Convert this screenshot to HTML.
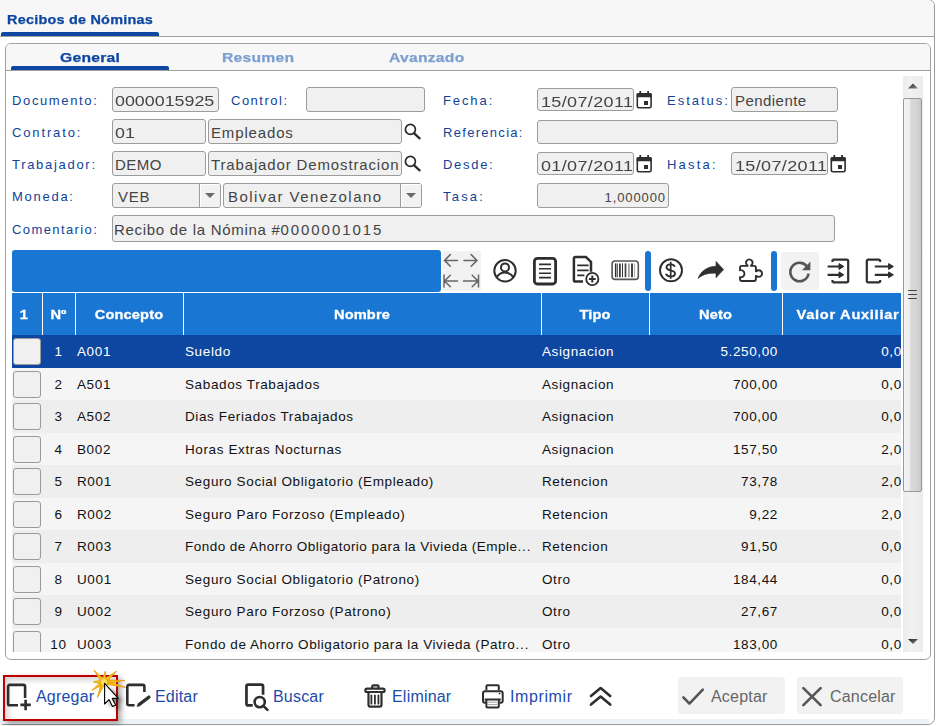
<!DOCTYPE html>
<html><head><meta charset="utf-8">
<style>
*{box-sizing:border-box;margin:0;padding:0}
html,body{width:939px;height:726px;overflow:hidden;background:#fff;font-family:"Liberation Sans",sans-serif;-webkit-font-smoothing:antialiased}
.a{position:absolute}
#outer{left:-3px;top:-1px;width:938px;height:726px;border:1px solid #9a9a9a;border-radius:7px;background:#fff;overflow:hidden}
#topbar{left:0;top:0;width:934px;height:37px;background:#f7f7f7;border-bottom:1px solid #a0a0a0;border-top-right-radius:6px}
#toptab{left:7px;top:13px;font-size:12px;font-weight:bold;color:#0d47a1;-webkit-text-stroke:0.25px #0d47a1;letter-spacing:0.2px;white-space:nowrap;transform:scaleX(1.2);transform-origin:0 0}
#topbarline{left:1px;top:32px;width:158px;height:4px;background:#0d47a1;border-radius:2px 2px 0 0}
#panel{left:5px;top:43px;width:926px;height:617px;border:1px solid #a0a0a0;border-radius:6px;background:#fff;overflow:hidden}
#tabs{left:0;top:0;width:924px;height:27px;background:#f7f7f7;border-bottom:1px solid #a0a0a0}
.tab{top:6px;font-size:12.75px;font-weight:bold;-webkit-text-stroke:0.25px currentColor;letter-spacing:0.2px;white-space:nowrap;transform:scaleX(1.23);transform-origin:0 0}
.lbl{font-size:13px;color:#0f4499;white-space:nowrap;transform-origin:0 0}
.inp{background:#f0f0f0;border:1px solid #9c9c9c;border-radius:3px;font-size:15px;color:#444;white-space:nowrap;overflow:hidden;padding-left:2px;line-height:16px;padding-top:4px}
.sx{display:inline-block;transform-origin:0 0}
.cal{width:17px;height:19px}
.ft{font-size:16px;color:#1a4caa;white-space:nowrap;letter-spacing:0.2px}
.th{font-size:12.5px;font-weight:bold;color:#fff;-webkit-text-stroke:0.3px #fff;text-align:center;letter-spacing:0.1px;white-space:nowrap;transform:scaleX(1.17);transform-origin:50% 0}
.tr{left:0;width:889px;font-size:13.5px;color:#111;letter-spacing:0.62px;white-space:nowrap}
.tr.even{background:#f5f5f5}.tr.odd{background:#eeeeee}.tr.sel1{background:#0d47a1;color:#fff}
.td{position:absolute;top:9px;line-height:15px;white-space:nowrap}
.nm{}
.cb{position:absolute;left:1px;top:3px;width:28px;height:27px;border:1px solid #9a9a9a;border-radius:3px;background:#f0f0f0}
.dd{position:absolute;right:0;top:0;width:21px;height:23px;border-left:1px solid #9c9c9c;box-shadow:inset 1px 1px 0 #fff;background:#f2f2f2}
.dd b{position:absolute;left:5px;top:9px;width:0;height:0;border-left:5px solid transparent;border-right:5px solid transparent;border-top:5px solid #6a6a6a}
</style></head><body>
<div id="outer" class="a"></div>
<div id="topbar" class="a"></div>
<div id="toptab" class="a">Recibos de Nóminas</div>
<div id="topbarline" class="a"></div>

<div id="panel" class="a">
  <div id="tabs" class="a"></div>
</div>
<div class="a" style="left:11px;top:66px;width:158px;height:4px;background:#0d47a1;border-radius:2px 2px 0 0"></div>
<div class="a tab" style="left:60px;top:50px;color:#0d47a1">General</div>
<div class="a tab" style="left:222px;top:50px;color:#7b9fcf">Resumen</div>
<div class="a tab" style="left:389px;top:50px;color:#7b9fcf">Avanzado</div>

<!-- form labels -->
<div class="a lbl" style="left:12px;top:93px;letter-spacing:1.63px">Documento:</div>
<div class="a lbl" style="left:12px;top:125px;letter-spacing:1.86px">Contrato:</div>
<div class="a lbl" style="left:12px;top:157px;letter-spacing:1.7px">Trabajador:</div>
<div class="a lbl" style="left:12px;top:189px;letter-spacing:1.73px">Moneda:</div>
<div class="a lbl" style="left:12px;top:222px;letter-spacing:1.4px">Comentario:</div>
<div class="a lbl" style="left:231px;top:93px;letter-spacing:1.5px">Control:</div>
<div class="a lbl" style="left:443px;top:93px;letter-spacing:1.9px">Fecha:</div>
<div class="a lbl" style="left:443px;top:125px;letter-spacing:1.3px">Referencia:</div>
<div class="a lbl" style="left:443px;top:157px;letter-spacing:1.7px">Desde:</div>
<div class="a lbl" style="left:443px;top:189px;letter-spacing:2.2px">Tasa:</div>
<div class="a lbl" style="left:667px;top:93px;letter-spacing:2.0px">Estatus:</div>
<div class="a lbl" style="left:667px;top:157px;letter-spacing:2.2px">Hasta:</div>

<!-- inputs -->
<div class="a inp" style="left:112px;top:87px;width:107px;height:25px;padding-top:5px"><span class="sx" style="transform:scaleX(1.19)">0000015925</span></div>
<div class="a inp" style="left:306px;top:87px;width:119px;height:25px"></div>
<div class="a inp" style="left:112px;top:119px;width:94px;height:25px;padding-top:5px"><span class="sx" style="transform:scaleX(1.19)">01</span></div>
<div class="a inp" style="left:208px;top:119px;width:194px;height:25px;padding-top:5px;letter-spacing:0.85px">Empleados</div>
<div class="a inp" style="left:112px;top:151px;width:94px;height:25px;padding-top:5px;letter-spacing:0.5px">DEMO</div>
<div class="a inp" style="left:208px;top:151px;width:194px;height:25px;letter-spacing:0.86px;padding-top:5px">Trabajador Demostracion</div>
<div class="a inp sel" style="left:112px;top:183px;width:109px;height:25px;letter-spacing:0.8px;padding-top:5px;padding-left:5px">VEB<i class="dd"><b></b></i></div>
<div class="a inp sel" style="left:223px;top:183px;width:199px;height:25px;letter-spacing:1.45px;padding-top:5px;padding-left:4px">Bolivar Venezolano<i class="dd"><b></b></i></div>
<div class="a inp" style="left:112px;top:215px;width:723px;height:27px;padding-top:6px;padding-left:1px;letter-spacing:0.7px">Recibo de la Nómina #<span style="letter-spacing:1.95px">0000001015</span></div>
<div class="a inp" style="left:537px;top:88px;width:97px;height:23px;padding-top:5px;padding-left:3px"><span class="sx" style="transform:scaleX(1.2);letter-spacing:0.3px">15/07/2011</span></div>
<div class="a inp" style="left:537px;top:120px;width:301px;height:24px"></div>
<div class="a inp" style="left:537px;top:152px;width:97px;height:23px;padding-top:5px;padding-left:3px"><span class="sx" style="transform:scaleX(1.2);letter-spacing:0.3px">01/07/2011</span></div>
<div class="a inp" style="left:537px;top:183px;width:132px;height:25px;font-size:13px;text-align:right;padding-right:2px;padding-top:6px;letter-spacing:0.9px">1,000000</div>
<div class="a inp" style="left:731px;top:87px;width:107px;height:25px;padding-top:5px;padding-left:3px;letter-spacing:0.45px">Pendiente</div>
<div class="a inp" style="left:731px;top:152px;width:97px;height:23px;padding-top:5px;padding-left:3px"><span class="sx" style="transform:scaleX(1.2);letter-spacing:0.3px">15/07/2011</span></div>

<!-- icons in form -->
<svg class="a" style="left:403px;top:123px" width="20" height="19" viewBox="0 0 20 19"><circle cx="7.4" cy="6.4" r="5" fill="none" stroke="#2a2a2a" stroke-width="1.7"/><line x1="11.2" y1="10.4" x2="16.6" y2="15.4" stroke="#2a2a2a" stroke-width="2.2" stroke-linecap="round"/></svg>
<svg class="a" style="left:403px;top:155px" width="20" height="19" viewBox="0 0 20 19"><circle cx="7.4" cy="6.4" r="5" fill="none" stroke="#2a2a2a" stroke-width="1.7"/><line x1="11.2" y1="10.4" x2="16.6" y2="15.4" stroke="#2a2a2a" stroke-width="2.2" stroke-linecap="round"/></svg>
<svg class="a cal" style="left:636px;top:90px" width="17" height="19" viewBox="0 0 17 19"><rect x="1.3" y="3.8" width="13.8" height="14" rx="1.6" fill="none" stroke="#2e2e2e" stroke-width="1.6"/><rect x="0.6" y="3.2" width="15.2" height="4" rx="1.2" fill="#2e2e2e"/><rect x="3.4" y="1" width="1.8" height="3" fill="#2e2e2e"/><rect x="11.2" y="1" width="1.8" height="3" fill="#2e2e2e"/><rect x="8" y="11" width="4" height="4" fill="#2e2e2e"/></svg>
<svg class="a cal" style="left:636px;top:154px" width="17" height="19" viewBox="0 0 17 19"><rect x="1.3" y="3.8" width="13.8" height="14" rx="1.6" fill="none" stroke="#2e2e2e" stroke-width="1.6"/><rect x="0.6" y="3.2" width="15.2" height="4" rx="1.2" fill="#2e2e2e"/><rect x="3.4" y="1" width="1.8" height="3" fill="#2e2e2e"/><rect x="11.2" y="1" width="1.8" height="3" fill="#2e2e2e"/><rect x="8" y="11" width="4" height="4" fill="#2e2e2e"/></svg>
<svg class="a cal" style="left:830px;top:154px" width="17" height="19" viewBox="0 0 17 19"><rect x="1.3" y="3.8" width="13.8" height="14" rx="1.6" fill="none" stroke="#2e2e2e" stroke-width="1.6"/><rect x="0.6" y="3.2" width="15.2" height="4" rx="1.2" fill="#2e2e2e"/><rect x="3.4" y="1" width="1.8" height="3" fill="#2e2e2e"/><rect x="11.2" y="1" width="1.8" height="3" fill="#2e2e2e"/><rect x="8" y="11" width="4" height="4" fill="#2e2e2e"/></svg>

<!-- toolbar -->
<div class="a" style="left:12px;top:250px;width:429px;height:42px;background:#1976d2;border-radius:3px"></div>
<div class="a" style="left:442px;top:251px;width:20px;height:20px;background:#f2f2f2;border-radius:2px"></div>
<div class="a" style="left:461px;top:251px;width:20px;height:20px;background:#f2f2f2;border-radius:2px"></div>
<div class="a" style="left:442px;top:271px;width:20px;height:20px;background:#f2f2f2;border-radius:2px"></div>
<div class="a" style="left:461px;top:271px;width:20px;height:20px;background:#f2f2f2;border-radius:2px"></div>
<svg class="a" style="left:442px;top:251px" width="40" height="40" viewBox="0 0 40 40" fill="none" stroke="#666" stroke-width="1.5" stroke-linecap="round">
<path d="M2.5 9.4H15.5M8.3 3.6L2.5 9.4L8.3 15.2"/><path d="M22 9.4H35M29.2 3.6L35 9.4L29.2 15.2"/>
<path d="M2 24V36M2.5 30H15.5M8.3 24.2L2.5 30L8.3 35.8"/><path d="M36.5 24V36M21.5 30H36M30.2 24.2L36 30L30.2 35.8"/></svg>
<svg class="a" style="left:492px;top:258px" width="26" height="26" viewBox="0 0 26 26" fill="none" stroke="#2e2e2e" stroke-width="2"><circle cx="13" cy="12.8" r="10.7"/><circle cx="13" cy="9.4" r="4"/><path d="M4.6 19.4C6.8 15.9 9.8 14.6 13 14.6S19.2 15.9 21.4 19.4"/></svg>
<svg class="a" style="left:532px;top:256px" width="26" height="30" viewBox="0 0 26 30" fill="none" stroke="#2e2e2e"><rect x="2.4" y="2.4" width="21.2" height="25.6" rx="3" stroke-width="2.8"/><path d="M7 8.4H19M7 12.8H19M7 17.2H19M7 21.6H19" stroke-width="1.6"/></svg>
<svg class="a" style="left:572px;top:255px" width="30" height="32" viewBox="0 0 30 32" fill="none" stroke="#2e2e2e"><path d="M11 26.6H3.6C2.5 26.6 1.9 26 1.9 24.9V3.4C1.9 2.3 2.5 1.9 3.6 1.9H13.8L19 6.8V16.8" stroke-width="2.5" stroke-linejoin="round"/><path d="M5.2 10.4H16.6M5.2 15.4H16.6M5.2 20.4H12.4" stroke-width="1.8"/><circle cx="20.3" cy="24" r="6.1" stroke-width="1.8"/><path d="M20.3 20.6V27.4M16.9 24H23.7" stroke-width="2"/></svg>
<svg class="a" style="left:610px;top:259px" width="30" height="22" viewBox="0 0 30 22" fill="none"><rect x="2.1" y="2" width="26.2" height="18.4" rx="3" stroke="#555" stroke-width="1.6"/><g stroke-width="1.7"><path d="M5.6 4.4V18.2" stroke="#333" stroke-width="1.4"/><path d="M7.3 4.4V18.2" stroke="#555" stroke-width="1.2"/><path d="M9.9 4.4V18.2" stroke="#333"/><path d="M12.5 4.4V18.2" stroke="#333" stroke-width="1"/><path d="M15.5 4.4V18.2" stroke="#444"/><path d="M18.9 4.4V18.2" stroke="#999"/><path d="M22 4.4V18.2" stroke="#222"/><path d="M24.6 4.4V18.2" stroke="#aaa" stroke-width="1"/></g></svg>
<div class="a" style="left:645px;top:251px;width:6px;height:40px;background:#1976d2;border-radius:3px"></div>
<svg class="a" style="left:658px;top:257px" width="26" height="27" viewBox="0 0 26 27" fill="none" stroke="#2e2e2e"><circle cx="13" cy="13.3" r="11" stroke-width="1.9"/><path d="M16.8 9.8C16.2 8.1 14.7 7.4 12.6 7.4C10.2 7.4 8.5 8.6 8.5 10.4C8.5 14.3 17 12.3 17 16.4C17 18.3 15.1 19.4 12.6 19.4C10.2 19.4 8.5 18.4 8 16.7" stroke-width="1.9"/><path d="M12.7 4.8V21.8" stroke-width="1.7"/></svg>
<svg class="a" style="left:697px;top:260px" width="28" height="20" viewBox="0 0 28 20"><path d="M1 18.5C3.6 11.4 9.6 6.6 19 6.2V1.4L26.6 9.6L19 17.8V13.2C11 12.8 5.4 14.6 1 18.5Z" fill="#2e2e2e" stroke="#2e2e2e" stroke-width="0.6" stroke-linejoin="round"/></svg>
<svg class="a" style="left:737px;top:258px" width="28" height="25" viewBox="0 0 28 25" fill="none" stroke="#2e2e2e" stroke-width="1.9" stroke-linejoin="round"><path d="M5 7.9H10.6V7.5A3.3 3.3 0 1 1 14 7.5V7.9H17C18.3 7.9 18.9 8.5 18.9 9.8V13.3H19.4A3.3 3.3 0 1 1 19.4 17.9H18.9V21C18.9 22.3 18.3 23 17 23H5C3.7 23 3 22.3 3 21V19.2A3.6 3.6 0 1 0 3 12.2V9.8C3 8.5 3.7 7.9 5 7.9Z"/></svg>
<div class="a" style="left:771px;top:251px;width:6px;height:40px;background:#1976d2;border-radius:3px"></div>
<div class="a" style="left:781px;top:252px;width:38px;height:38px;background:#f2f2f2;border-radius:3px"></div>
<svg class="a" style="left:787px;top:258px" width="26" height="26" viewBox="0 0 26 26" fill="none"><path d="M20.6 9.6A9.2 9.2 0 1 0 21.6 15.6" stroke="#555" stroke-width="2.6"/><path d="M23.4 3.6V12.2H15Z" fill="#555"/></svg>
<svg class="a" style="left:826px;top:257px" width="26" height="27" viewBox="0 0 26 27" fill="none" stroke="#2e2e2e" stroke-width="2.2"><path d="M6.5 2.6H20.6C21.6 2.6 22.2 3.2 22.2 4.2V23.8C22.2 24.8 21.6 25.4 20.6 25.4H6.5M6.5 2.6V5M6.5 23V25.4"/><path d="M1.6 9.5H14.5M1.6 17.8H14.5"/><path d="M13 6.6L17.8 9.5L13 12.4ZM13 14.9L17.8 17.8L13 20.7Z" fill="#2e2e2e" stroke-width="1" stroke-linejoin="round"/></svg>
<svg class="a" style="left:864px;top:257px" width="32" height="27" viewBox="0 0 32 27" fill="none" stroke="#2e2e2e" stroke-width="2.2"><path d="M16.2 5V4.2C16.2 3.2 15.6 2.6 14.6 2.6H4.4C3.4 2.6 2.8 3.2 2.8 4.2V23.8C2.8 24.8 3.4 25.4 4.4 25.4H14.6C15.6 25.4 16.2 24.8 16.2 23.8V23"/><path d="M10.8 9.5H26.5M10.8 17.8H26.5"/><path d="M24.6 6.6L29.4 9.5L24.6 12.4ZM24.6 14.9L29.4 17.8L24.6 20.7Z" fill="#2e2e2e" stroke-width="1" stroke-linejoin="round"/></svg>

<!-- table header -->
<div class="a" style="left:12px;top:292px;width:889px;height:43px;background:#1976d2;border-top:1px solid #fff"></div>
<div class="a" style="left:42px;top:293px;width:1px;height:42px;background:#fff"></div>
<div class="a" style="left:75px;top:293px;width:1px;height:42px;background:#fff"></div>
<div class="a" style="left:183px;top:293px;width:1px;height:42px;background:#fff"></div>
<div class="a" style="left:541px;top:293px;width:1px;height:42px;background:#fff"></div>
<div class="a" style="left:649px;top:293px;width:1px;height:42px;background:#fff"></div>
<div class="a" style="left:782px;top:293px;width:1px;height:42px;background:#fff"></div>
<div class="a th" style="left:9px;top:308px;width:30px">1</div>
<div class="a th" style="left:42px;top:308px;width:33px">Nº</div>
<div class="a th" style="left:75px;top:308px;width:108px">Concepto</div>
<div class="a th" style="left:183px;top:308px;width:358px">Nombre</div>
<div class="a th" style="left:541px;top:308px;width:108px">Tipo</div>
<div class="a th" style="left:649px;top:308px;width:133px">Neto</div>
<div class="a th" style="left:779px;top:308px;width:138px;letter-spacing:0.6px">Valor Auxiliar</div>
<div class="a" id="grid" style="left:12px;top:335px;width:889px;height:317px;overflow:hidden">
<div class="a tr sel1" style="top:0px;height:33px"><i class="cb"></i><span class="td" style="left:30px;width:33px;text-align:center">1</span><span class="td" style="left:65px">A001</span><span class="td nm" style="left:173px">Sueldo</span><span class="td" style="left:530px">Asignacion</span><span class="td" style="left:637px;width:129px;text-align:right">5.250,00</span><span class="td" style="left:771px;width:127px;text-align:right">0,00</span></div>
<div class="a tr even" style="top:33px;height:32px"><i class="cb"></i><span class="td" style="left:30px;width:33px;text-align:center">2</span><span class="td" style="left:65px">A501</span><span class="td nm" style="left:173px">Sabados Trabajados</span><span class="td" style="left:530px">Asignacion</span><span class="td" style="left:637px;width:129px;text-align:right">700,00</span><span class="td" style="left:771px;width:127px;text-align:right">0,00</span></div>
<div class="a tr odd" style="top:65px;height:33px"><i class="cb"></i><span class="td" style="left:30px;width:33px;text-align:center">3</span><span class="td" style="left:65px">A502</span><span class="td nm" style="left:173px">Dias Feriados Trabajados</span><span class="td" style="left:530px">Asignacion</span><span class="td" style="left:637px;width:129px;text-align:right">700,00</span><span class="td" style="left:771px;width:127px;text-align:right">0,00</span></div>
<div class="a tr even" style="top:98px;height:32px"><i class="cb"></i><span class="td" style="left:30px;width:33px;text-align:center">4</span><span class="td" style="left:65px">B002</span><span class="td nm" style="left:173px">Horas Extras Nocturnas</span><span class="td" style="left:530px">Asignacion</span><span class="td" style="left:637px;width:129px;text-align:right">157,50</span><span class="td" style="left:771px;width:127px;text-align:right">2,00</span></div>
<div class="a tr odd" style="top:130px;height:33px"><i class="cb"></i><span class="td" style="left:30px;width:33px;text-align:center">5</span><span class="td" style="left:65px">R001</span><span class="td nm" style="left:173px">Seguro Social Obligatorio (Empleado)</span><span class="td" style="left:530px">Retencion</span><span class="td" style="left:637px;width:129px;text-align:right">73,78</span><span class="td" style="left:771px;width:127px;text-align:right">2,00</span></div>
<div class="a tr even" style="top:163px;height:32px"><i class="cb"></i><span class="td" style="left:30px;width:33px;text-align:center">6</span><span class="td" style="left:65px">R002</span><span class="td nm" style="left:173px">Seguro Paro Forzoso (Empleado)</span><span class="td" style="left:530px">Retencion</span><span class="td" style="left:637px;width:129px;text-align:right">9,22</span><span class="td" style="left:771px;width:127px;text-align:right">2,00</span></div>
<div class="a tr odd" style="top:195px;height:33px"><i class="cb"></i><span class="td" style="left:30px;width:33px;text-align:center">7</span><span class="td" style="left:65px">R003</span><span class="td nm" style="left:173px;letter-spacing:0.47px">Fondo de Ahorro Obligatorio para la Vivieda (Emple<span style="letter-spacing:0.9px">...</span></span><span class="td" style="left:530px">Retencion</span><span class="td" style="left:637px;width:129px;text-align:right">91,50</span><span class="td" style="left:771px;width:127px;text-align:right">0,00</span></div>
<div class="a tr even" style="top:228px;height:32px"><i class="cb"></i><span class="td" style="left:30px;width:33px;text-align:center">8</span><span class="td" style="left:65px">U001</span><span class="td nm" style="left:173px">Seguro Social Obligatorio (Patrono)</span><span class="td" style="left:530px">Otro</span><span class="td" style="left:637px;width:129px;text-align:right">184,44</span><span class="td" style="left:771px;width:127px;text-align:right">0,00</span></div>
<div class="a tr odd" style="top:260px;height:33px"><i class="cb"></i><span class="td" style="left:30px;width:33px;text-align:center">9</span><span class="td" style="left:65px">U002</span><span class="td nm" style="left:173px">Seguro Paro Forzoso (Patrono)</span><span class="td" style="left:530px">Otro</span><span class="td" style="left:637px;width:129px;text-align:right">27,67</span><span class="td" style="left:771px;width:127px;text-align:right">0,00</span></div>
<div class="a tr even" style="top:293px;height:32px"><i class="cb"></i><span class="td" style="left:30px;width:33px;text-align:center">10</span><span class="td" style="left:65px">U003</span><span class="td nm" style="left:173px;letter-spacing:0.55px">Fondo de Ahorro Obligatorio para la Vivieda (Patro<span style="letter-spacing:0.9px">...</span></span><span class="td" style="left:530px">Otro</span><span class="td" style="left:637px;width:129px;text-align:right">183,00</span><span class="td" style="left:771px;width:127px;text-align:right">0,00</span></div>
</div>

<!-- scrollbar -->
<div class="a" style="left:903px;top:76px;width:20px;height:576px;background:linear-gradient(90deg,#ececec,#f2f2f2 40%,#efefef 60%,#ececec)"></div>
<svg class="a" style="left:907px;top:82px" width="12" height="8" viewBox="0 0 12 8"><defs><linearGradient id="tg" x1="0" y1="0" x2="1" y2="1"><stop offset="0" stop-color="#222"/><stop offset="1" stop-color="#888"/></linearGradient></defs><path d="M1 6.5L6 1.5L11 6.5Z" fill="url(#tg)"/></svg>
<svg class="a" style="left:907px;top:638px" width="12" height="8" viewBox="0 0 12 8"><path d="M1 1L11 1L6 6Z" fill="url(#tg)"/></svg>
<div class="a" style="left:903px;top:98px;width:19px;height:394px;border:1px solid #9a9a9a;border-radius:2px;background:linear-gradient(90deg,#f4f4f4,#ececec 35%,#d8d8d8 40%,#d6d6d6 70%,#c8c8c8)"></div>
<svg class="a" style="left:907px;top:288px" width="11" height="12" viewBox="0 0 11 12" stroke="#444" stroke-width="1" stroke-linecap="round"><path d="M1.5 2.5H9.5M1.5 6.5H9.5M1.5 10.5H9.5"/></svg>

<!-- footer -->
<div class="a" style="left:0;top:719px;width:929px;height:5px;background:#eef2f5"></div>

<div class="a" style="left:3px;top:675px;width:115px;height:46px;border:2px solid #c00000;box-shadow:inset 3px 3px 6px rgba(0,0,0,.18),3px 3px 6px rgba(0,0,0,.35)"></div>
<svg class="a" style="left:6px;top:682px" width="27" height="30" viewBox="0 0 27 30" fill="none" stroke="#2e2e2e" stroke-width="2.6" stroke-linejoin="round"><path d="M12 23.3H3.7C2.7 23.3 2.1 22.7 2.1 21.7V4.5C2.1 3.5 2.7 2.9 3.7 2.9H17.5C18.5 2.9 19.1 3.5 19.1 4.5V16"/><path d="M19.6 17.8V28.2M14.4 22.9H24.8"/></svg>
<div class="a ft" style="left:36px;top:688px">Agregar</div>
<svg class="a" style="left:124px;top:682px" width="28" height="30" viewBox="0 0 28 30" fill="none" stroke="#2e2e2e" stroke-width="2.6" stroke-linejoin="round"><path d="M10.6 23.3H4.9C3.9 23.3 3.3 22.7 3.3 21.7V4.5C3.3 3.5 3.9 2.9 4.9 2.9H18.8C19.8 2.9 20.4 3.5 20.4 4.5V10"/><path d="M13.2 24.4L14.2 21.6L24 14.2C24.8 13.6 25.6 13.8 26 14.4C26.4 15 26.2 15.8 25.6 16.3L15.8 23.7Z" fill="#2e2e2e" stroke-width="0.8"/></svg>
<div class="a ft" style="left:155px;top:688px">Editar</div>
<svg class="a" style="left:242px;top:682px" width="28" height="30" viewBox="0 0 28 30" fill="none" stroke="#2e2e2e" stroke-width="2.7" stroke-linejoin="round"><path d="M10.7 23.45H6.2C5.1 23.45 4.45 22.8 4.45 21.7V4.3C4.45 3.2 5.1 2.55 6.2 2.55H19.3C20.4 2.55 21.05 3.2 21.05 4.3V12.8"/><circle cx="17.7" cy="20.1" r="5.1" stroke-width="2.6"/><path d="M21.4 23.8L25.4 27.9" stroke-width="2.6" stroke-linecap="round"/></svg>
<div class="a ft" style="left:273px;top:688px">Buscar</div>
<svg class="a" style="left:362px;top:683px" width="26" height="27" viewBox="0 0 26 27" fill="none" stroke="#2e2e2e" stroke-width="2.2" stroke-linejoin="round"><rect x="3.4" y="5.6" width="19.2" height="3.4" rx="1.6"/><path d="M10.2 4.9V3.6C10.2 2.8 10.6 2.4 11.4 2.4H15.4C16.2 2.4 16.6 2.8 16.6 3.6V4.9"/><path d="M6.5 9.4V21.8C6.5 22.9 7.1 23.7 8.2 23.7H17.8C18.9 23.7 19.5 22.9 19.5 21.8V9.4"/><path d="M9.4 12.3V20.7M12.9 12.3V20.7M16.4 12.3V20.7" stroke-width="1.8" stroke-linecap="round"/></svg>
<div class="a ft" style="left:392px;top:688px">Eliminar</div>
<svg class="a" style="left:479px;top:683px" width="27" height="26" viewBox="0 0 27 26" fill="none" stroke="#2e2e2e" stroke-width="2" stroke-linejoin="round"><path d="M7.4 7.3V3.3C7.4 2.7 7.8 2.3 8.4 2.3H18.8C19.4 2.3 19.8 2.7 19.8 3.3V7.3"/><path d="M7 19.7H6C4.8 19.7 4 18.9 4 17.7V10.3C4 9.1 4.8 8.3 6 8.3H21.7C22.9 8.3 23.7 9.1 23.7 10.3V17.7C23.7 18.9 22.9 19.7 21.7 19.7H20.5"/><path d="M5.6 16.5H21.8"/><path d="M7.4 16.5V23.6C7.4 24.2 7.8 24.6 8.4 24.6H18.8C19.4 24.6 19.8 24.2 19.8 23.6V16.5"/><path d="M9.2 19.2H18M9.2 21.6H18" stroke="#999" stroke-width="0.9"/><circle cx="20.6" cy="10.6" r="0.9" fill="#2e2e2e" stroke="none"/></svg>
<div class="a ft" style="left:510px;top:688px;letter-spacing:0.6px">Imprimir</div>
<svg class="a" style="left:588px;top:685px" width="26" height="22" viewBox="0 0 26 22" fill="none" stroke="#2e2e2e" stroke-width="2.6" stroke-linecap="round" stroke-linejoin="round"><path d="M3 11L12.6 3L22.2 11M3 19.6L12.6 11.6L22.2 19.6"/></svg>
<div class="a" style="left:678px;top:677px;width:107px;height:37px;background:#f2f2f2;border-radius:3px"></div>
<svg class="a" style="left:681px;top:687px" width="24" height="19" viewBox="0 0 24 19" fill="none" stroke="#555" stroke-width="2.6" stroke-linecap="round" stroke-linejoin="round"><path d="M2.4 10.4L8.4 16.6L21.8 2.6"/></svg>
<div class="a ft" style="left:711px;top:688px;color:#666">Aceptar</div>
<div class="a" style="left:797px;top:677px;width:106px;height:37px;background:#f2f2f2;border-radius:3px"></div>
<svg class="a" style="left:801px;top:686px" width="22" height="21" viewBox="0 0 22 21" fill="none" stroke="#555" stroke-width="2.6" stroke-linecap="round"><path d="M2.4 2.2L19.6 19.2M19.6 2.2L2.4 19.2"/></svg>
<div class="a ft" style="left:830px;top:688px;color:#666">Cancelar</div>
<!-- cursor -->
<svg class="a" style="left:88px;top:666px" width="40" height="46" viewBox="0 0 40 46">
<defs><filter id="sh" x="-50%" y="-50%" width="200%" height="200%"><feGaussianBlur stdDeviation="2.2"/></filter></defs>
<path d="M19.6 19.3V40L24 35.6L27.5 42.5L30.6 41L27.2 34.4H33.2Z" fill="#000" opacity=".45" filter="url(#sh)" transform="translate(2,1.5)"/>
<path d="M16.1 13.4L6.0 4.2L13.2 15.9ZM17.7 14.6L17.3 5.2L14.0 14.0ZM18.0 16.3L28.7 5.2L15.6 13.4ZM17.2 17.6L36.9 14.5L17.0 13.8ZM16.6 18.0L37.6 21.4L17.5 14.3ZM13.3 15.2L3.9 24.5L15.5 18.2ZM13.3 16.5L9.4 31.4L16.8 17.9ZM14.1 13.9L5.3 15.9L14.1 17.7Z" fill="#f7c21c" stroke="#e39a00" stroke-width="0.8" stroke-linejoin="round"/>
<circle cx="15.8" cy="15.8" r="3.2" fill="#f4dc5a"/>
<path d="M16.6 17.3V38L21 33.6L24.5 40.5L27.6 39L24.2 32.4H30.2Z" fill="#fff" stroke="#000" stroke-width="1.1" stroke-linejoin="round"/>
</svg>
</body></html>
